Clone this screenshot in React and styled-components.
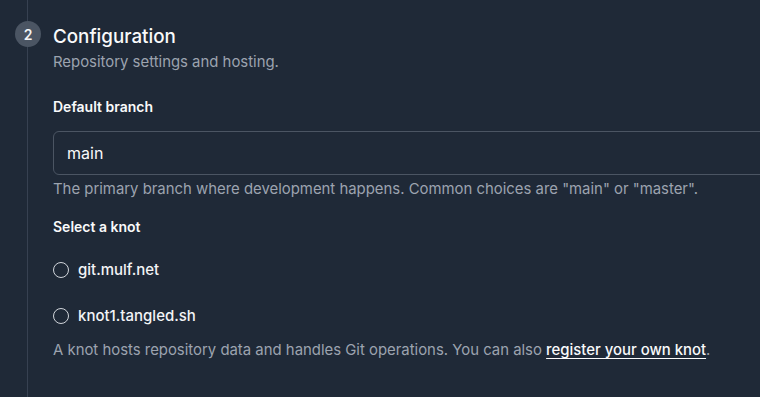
import styled, { createGlobalStyle } from 'styled-components';

const GlobalStyle = createGlobalStyle`
    html, body {
        margin: 0;
        padding: 0;
        background: #1f2937;
        overflow: hidden;
    }
    body {
        font-family: Inter, "Noto Sans", sans-serif;
        color: #f9fafb;
        -webkit-font-smoothing: antialiased;
    }
`;

const Step = styled.section`
    display: flex;
    height: 397px;
    width: 760px;
    overflow: hidden;
`;

const Rail = styled.div`
    position: relative;
    width: 53px;
    flex-shrink: 0;

    &::before {
        content: '';
        position: absolute;
        top: 0;
        bottom: 0;
        left: 27px;
        width: 1px;
        background: #374151;
    }
`;

const Badge = styled.div`
    position: absolute;
    top: 21px;
    left: 15px;
    width: 26px;
    height: 26px;
    border-radius: 50%;
    background: #4b5563;
    color: #f3f4f6;
    font-size: 14px;
    font-weight: 600;
    display: flex;
    align-items: center;
    justify-content: center;
`;

const Body = styled.div`
    flex: 1;
    min-width: 0;
    padding-top: 23px;
`;

const Title = styled.h2`
    margin: 0;
    font-size: 18.8px;
    font-weight: 500;
    line-height: 28px;
    color: #f9fafb;
`;

const Subtitle = styled.p`
    margin: 0;
    font-size: 14.9px;
    line-height: 22px;
    color: #9ca3af;
`;

const Field = styled.div`
    margin-top: ${({ $top }) => $top}px;
`;

const Label = styled.div`
    font-size: 14px;
    font-weight: 600;
    line-height: 20px;
    color: #f9fafb;
`;

const Input = styled.input`
    display: block;
    box-sizing: border-box;
    width: calc(100% + 20px);
    height: 44px;
    margin-top: 14px;
    padding: 0 13px;
    background: transparent;
    border: 1px solid #4b5563;
    border-radius: 6px;
    color: #f9fafb;
    font-family: inherit;
    font-size: 16px;
    outline: none;
`;

const Help = styled.p`
    margin: ${({ $top }) => $top}px 0 0;
    font-size: 14.9px;
    line-height: 22px;
    color: #9ca3af;
    white-space: nowrap;

    a {
        color: #f9fafb;
        font-weight: 500;
        text-decoration: underline;
        text-underline-offset: 3px;
    }
`;

const Options = styled.div`
    display: flex;
    flex-direction: column;
    gap: 26px;
    margin-top: 23px;
`;

const Option = styled.label`
    display: flex;
    align-items: center;
    gap: 9px;
    font-size: 15px;
    font-weight: 500;
    line-height: 20px;
    color: #f3f4f6;
`;

const Radio = styled.span`
    width: 16px;
    height: 16px;
    box-sizing: border-box;
    border: 1px solid #d1d5db;
    border-radius: 50%;
    flex-shrink: 0;
`;

const knots = ['git.mulf.net', 'knot1.tangled.sh'];

export default function App() {
    return (
        <>
            <GlobalStyle />
            <Step>
                <Rail>
                    <Badge>2</Badge>
                </Rail>
                <Body>
                    <Title>Configuration</Title>
                    <Subtitle>Repository settings and hosting.</Subtitle>

                    <Field $top={24}>
                        <Label>Default branch</Label>
                        <Input defaultValue="main" />
                        <Help $top={3}>
                            The primary branch where development happens. Common choices are "main" or "master".
                        </Help>
                    </Field>

                    <Field $top={17}>
                        <Label>Select a knot</Label>
                        <Options>
                            {knots.map((k) => (
                                <Option key={k}>
                                    <Radio />
                                    {k}
                                </Option>
                            ))}
                        </Options>
                        <Help $top={13}>
                            A knot hosts repository data and handles Git operations. You can also{' '}
                            <a href="#">register your own knot</a>.
                        </Help>
                    </Field>
                </Body>
            </Step>
        </>
    );
}
